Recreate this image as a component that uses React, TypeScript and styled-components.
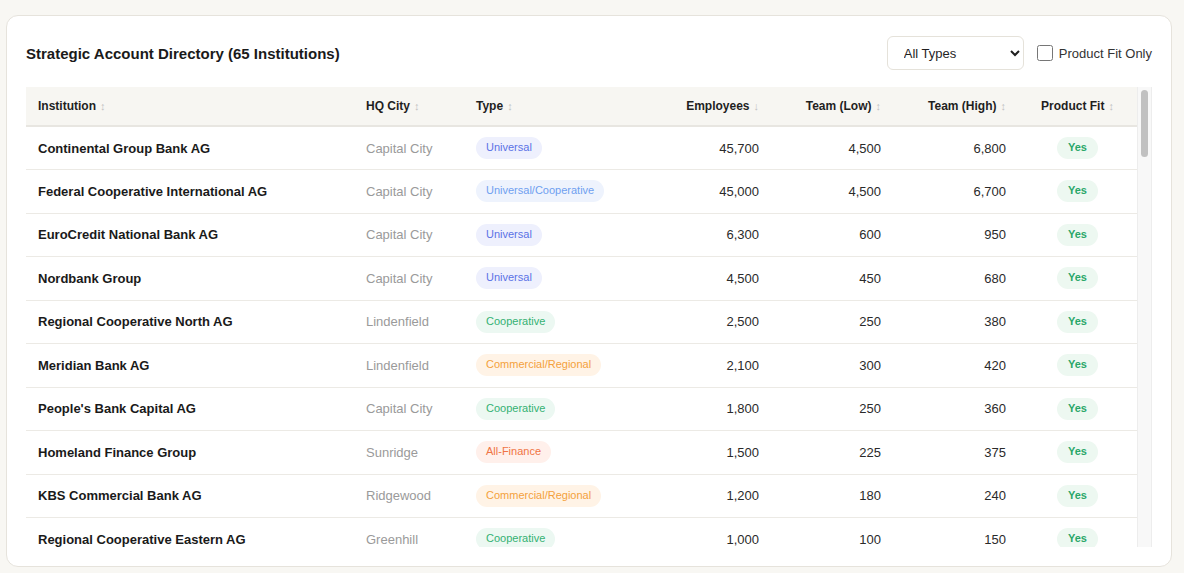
import React, { useMemo, useState } from "react";
import styled, { createGlobalStyle } from "styled-components";

const GlobalStyle = createGlobalStyle`
    * { box-sizing: border-box; }
    body {
        margin: 0;
        background: #f8f7f3;
        font-family: "Liberation Sans", Arial, sans-serif;
        color: #1f1f1f;
    }
`;

const Page = styled.div`
    padding: 15px 12px 6px 6px;
`;

const Card = styled.section`
    background: #fff;
    border: 1px solid #e6e3dc;
    border-radius: 12px;
    padding: 20px 19px 19px 19px;
    height: 552px;
    display: flex;
    flex-direction: column;
`;

const Toolbar = styled.div`
    display: flex;
    align-items: center;
    justify-content: space-between;
    height: 34px;
    margin-bottom: 17px;
    flex-shrink: 0;
`;

const Title = styled.h2`
    margin: 0;
    font-size: 15px;
    font-weight: 700;
    color: #1a1a1a;
`;

const Filters = styled.div`
    display: flex;
    align-items: center;
    gap: 13px;
`;

const Select = styled.select`
    width: 137px;
    height: 34px;
    border: 1px solid #e5e2da;
    border-radius: 6px;
    background: #fff;
    padding: 0 8px 0 12px;
    font-family: "Liberation Sans", Arial, sans-serif;
    font-size: 13px;
    color: #1f1f1f;
`;

const CheckLabel = styled.label`
    display: flex;
    align-items: center;
    gap: 6px;
    font-size: 13px;
    color: #333;
    input {
        width: 16px;
        height: 16px;
        margin: 0;
    }
`;

const TableFrame = styled.div`
    flex: 1;
    min-height: 0;
    display: flex;
`;

// native scrollbar is hidden; the track beside it draws the bar
const TableArea = styled.div`
    flex: 1;
    overflow-y: auto;
    scrollbar-width: none;
    &::-webkit-scrollbar { display: none; }
`;

const ScrollTrack = styled.div`
    width: 15px;
    flex-shrink: 0;
    background: #f8f8f8;
    border-left: 1px solid #ededed;
    border-right: 1px solid #ededed;
    padding: 3px 3px 0 3px;
`;

const ScrollThumb = styled.div<{ $h: number }>`
    height: ${(p) => p.$h}px;
    background: #c1c1c1;
    border-radius: 4px;
`;

const Table = styled.table`
    width: 100%;
    border-collapse: collapse;
    table-layout: fixed;
`;

const Th = styled.th<{ $align?: string; $w: number }>`
    position: sticky;
    top: 0;
    z-index: 1;
    width: ${(p) => p.$w}px;
    height: 39px;
    background: #f7f6f2;
    border-bottom: 2px solid #e8e6e1;
    padding: 0 12px;
    text-align: ${(p) => p.$align || "left"};
    font-size: 12px;
    font-weight: 700;
    color: #1f1f1f;
    white-space: nowrap;
`;

const SortMark = styled.span`
    margin-left: 4px;
    font-size: 11px;
    color: #c2c2c2;
    font-weight: 400;
`;

const Row = styled.tr`
    border-bottom: 1px solid #eceae5;
`;

const Td = styled.td<{ $align?: string }>`
    height: 43.5px;
    padding: 0 12px;
    text-align: ${(p) => p.$align || "left"};
    font-size: 13px;
    color: #2a2a2a;
    white-space: nowrap;
`;

const Name = styled(Td)`
    font-weight: 700;
    color: #1a1a1a;
`;

const City = styled(Td)`
    color: #9a9a9a;
`;

const badgeColors: Record<string, [string, string]> = {
    Universal: ["#eef0fd", "#5b72e6"],
    "Universal/Cooperative": ["#eef3fd", "#6ea0f0"],
    Cooperative: ["#ecf8f2", "#34b173"],
    "Commercial/Regional": ["#fff3e6", "#f4a13c"],
    "All-Finance": ["#fff0eb", "#f07444"],
    Savings: ["#f3effc", "#8c6ad8"],
};

const Badge = styled.span<{ $type: string }>`
    display: inline-block;
    padding: 4px 10px 6px;
    border-radius: 11px;
    font-size: 11px;
    line-height: 12px;
    vertical-align: middle;
    background: ${(p) => (badgeColors[p.$type] || badgeColors.Universal)[0]};
    color: ${(p) => (badgeColors[p.$type] || badgeColors.Universal)[1]};
`;

const Fit = styled.span<{ $yes: boolean }>`
    display: inline-block;
    padding: 4px 11px 6px;
    border-radius: 11px;
    font-size: 11px;
    line-height: 12px;
    font-weight: 700;
    vertical-align: middle;
    background: ${(p) => (p.$yes ? "#edf8f1" : "#f3f3f3")};
    color: ${(p) => (p.$yes ? "#2aa769" : "#999")};
`;

interface Institution {
    name: string;
    city: string;
    type: string;
    employees: number;
    low: number;
    high: number;
    fit: boolean;
}

const top: Institution[] = [
    { name: "Continental Group Bank AG", city: "Capital City", type: "Universal", employees: 45700, low: 4500, high: 6800, fit: true },
    { name: "Federal Cooperative International AG", city: "Capital City", type: "Universal/Cooperative", employees: 45000, low: 4500, high: 6700, fit: true },
    { name: "EuroCredit National Bank AG", city: "Capital City", type: "Universal", employees: 6300, low: 600, high: 950, fit: true },
    { name: "Nordbank Group", city: "Capital City", type: "Universal", employees: 4500, low: 450, high: 680, fit: true },
    { name: "Regional Cooperative North AG", city: "Lindenfield", type: "Cooperative", employees: 2500, low: 250, high: 380, fit: true },
    { name: "Meridian Bank AG", city: "Lindenfield", type: "Commercial/Regional", employees: 2100, low: 300, high: 420, fit: true },
    { name: "People's Bank Capital AG", city: "Capital City", type: "Cooperative", employees: 1800, low: 250, high: 360, fit: true },
    { name: "Homeland Finance Group", city: "Sunridge", type: "All-Finance", employees: 1500, low: 225, high: 375, fit: true },
    { name: "KBS Commercial Bank AG", city: "Ridgewood", type: "Commercial/Regional", employees: 1200, low: 180, high: 240, fit: true },
    { name: "Regional Cooperative Eastern AG", city: "Greenhill", type: "Cooperative", employees: 1000, low: 100, high: 150, fit: true },
];

const cities = ["Capital City", "Lindenfield", "Sunridge", "Ridgewood", "Greenhill", "Westport", "Oakvale"];
const types = ["Universal", "Universal/Cooperative", "Cooperative", "Commercial/Regional", "All-Finance", "Savings"];
const prefixes = ["Savings Bank", "Volksbank", "Private Bank", "Trust Bank", "City Bank", "Land Bank"];
const places = ["Westport", "Oakvale", "Riverside", "Hillcrest", "Lakeshore", "Brookfield", "Stonebridge", "Maplewood", "Fairhaven"];

const rest: Institution[] = Array.from({ length: 55 }, (_, i) => {
    const employees = Math.max(120, 980 - i * 16);
    return {
        name: `${prefixes[i % prefixes.length]} ${places[i % places.length]}${i % 3 === 0 ? " AG" : ""}`,
        city: cities[(i * 3) % cities.length],
        type: types[(i * 2) % types.length],
        employees,
        low: Math.round(employees * 0.1),
        high: Math.round(employees * 0.15),
        fit: i % 4 !== 3,
    };
});

const data = [...top, ...rest];

const columns: { label: string; w: number; align?: string; sort: string }[] = [
    { label: "Institution", w: 328, sort: "↕" },
    { label: "HQ City", w: 110, sort: "↕" },
    { label: "Type", w: 190, sort: "↕" },
    { label: "Employees", w: 117, align: "right", sort: "↓" },
    { label: "Team (Low)", w: 122, align: "right", sort: "↕" },
    { label: "Team (High)", w: 125, align: "right", sort: "↕" },
    { label: "Product Fit", w: 119, align: "center", sort: "↕" },
];

const fmt = (n: number) => n.toLocaleString("en-US");

function App() {
    const [type, setType] = useState("All");
    const [fitOnly, setFitOnly] = useState(false);

    const rows = useMemo(
        () => data.filter((d) => (type === "All" || d.type === type) && (!fitOnly || d.fit)),
        [type, fitOnly]
    );

    return (
        <Page>
            <GlobalStyle />
            <Card>
                <Toolbar>
                    <Title>Strategic Account Directory (65 Institutions)</Title>
                    <Filters>
                        <Select value={type} onChange={(e) => setType(e.target.value)}>
                            <option value="All">All Types</option>
                            {types.map((t) => (
                                <option key={t} value={t}>{t}</option>
                            ))}
                        </Select>
                        <CheckLabel>
                            <input type="checkbox" checked={fitOnly} onChange={(e) => setFitOnly(e.target.checked)} />
                            Product Fit Only
                        </CheckLabel>
                    </Filters>
                </Toolbar>
                <TableFrame>
                    <TableArea>
                        <Table>
                            <thead>
                                <tr>
                                    {columns.map((c) => (
                                        <Th key={c.label} $w={c.w} $align={c.align}>
                                            {c.label}
                                            <SortMark>{c.sort}</SortMark>
                                        </Th>
                                    ))}
                                </tr>
                            </thead>
                            <tbody>
                                {rows.map((r) => (
                                    <Row key={r.name}>
                                        <Name>{r.name}</Name>
                                        <City>{r.city}</City>
                                        <Td><Badge $type={r.type}>{r.type}</Badge></Td>
                                        <Td $align="right">{fmt(r.employees)}</Td>
                                        <Td $align="right">{fmt(r.low)}</Td>
                                        <Td $align="right">{fmt(r.high)}</Td>
                                        <Td $align="center"><Fit $yes={r.fit}>{r.fit ? "Yes" : "No"}</Fit></Td>
                                    </Row>
                                ))}
                            </tbody>
                        </Table>
                    </TableArea>
                    <ScrollTrack>
                        <ScrollThumb $h={67} />
                    </ScrollTrack>
                </TableFrame>
            </Card>
        </Page>
    );
}

export default App;
